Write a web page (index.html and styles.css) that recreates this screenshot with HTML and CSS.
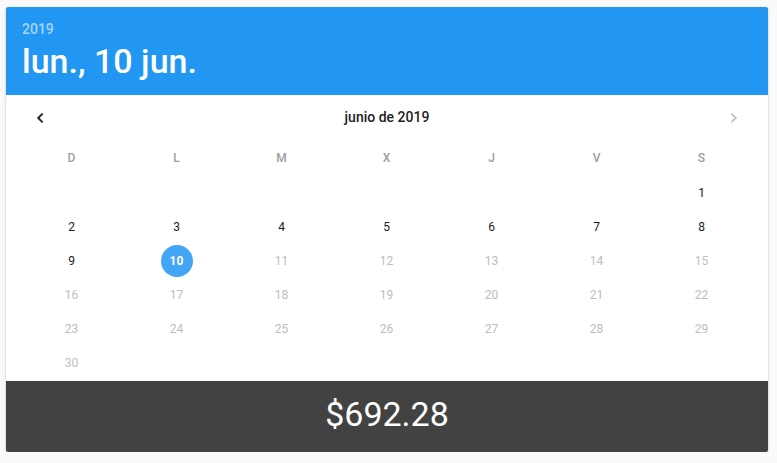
FILE: index.html
```html
<!DOCTYPE html>
<html lang="es">
<head>
<meta charset="utf-8">
<title>Selector de fecha</title>
<link rel="stylesheet" href="styles.css">
</head>
<body>
<div class="card">
  <header class="picker-header">
    <div class="year">2019</div>
    <div class="date">lun., 10 jun.</div>
  </header>
  <section class="calendar">
    <div class="nav">
      <button class="nav-btn" aria-label="Mes anterior">
        <svg viewBox="0 0 24 24" width="24" height="24"><path d="M14.6 7.6 L10.2 12 L14.6 16.4" fill="none" stroke="currentColor" stroke-width="1.9"/></svg>
      </button>
      <div class="month">junio de 2019</div>
      <button class="nav-btn disabled" aria-label="Mes siguiente">
        <svg viewBox="0 0 24 24" width="24" height="24"><path d="M9.4 7.6 L13.8 12 L9.4 16.4" fill="none" stroke="currentColor" stroke-width="1.9"/></svg>
      </button>
    </div>
    <div class="week-labels">
      <span>D</span><span>L</span><span>M</span><span>X</span><span>J</span><span>V</span><span>S</span>
    </div>
    <div class="days">
      <span></span><span></span><span></span><span></span><span></span><span></span><span class="day">1</span>
      <span class="day">2</span><span class="day">3</span><span class="day">4</span><span class="day">5</span><span class="day">6</span><span class="day">7</span><span class="day">8</span>
      <span class="day">9</span><span class="day selected"><b>10</b></span><span class="day off">11</span><span class="day off">12</span><span class="day off">13</span><span class="day off">14</span><span class="day off">15</span>
      <span class="day off">16</span><span class="day off">17</span><span class="day off">18</span><span class="day off">19</span><span class="day off">20</span><span class="day off">21</span><span class="day off">22</span>
      <span class="day off">23</span><span class="day off">24</span><span class="day off">25</span><span class="day off">26</span><span class="day off">27</span><span class="day off">28</span><span class="day off">29</span>
      <span class="day off">30</span>
    </div>
  </section>
  <footer class="total">$692.28</footer>
</div>
</body>
</html>
```

FILE: styles.css
```css
* { box-sizing: border-box; }
html, body { margin: 0; }
body {
  background: #fafafa;
  padding: 7px 0 0 6px;
  font-family: Roboto, "Noto Sans", sans-serif;
  color: #212121;
}
.card {
  width: 762px;
  background: #fff;
  border-radius: 2px;
  overflow: hidden;
  box-shadow: 0 1px 3px rgba(0,0,0,0.2), 0 1px 1px rgba(0,0,0,0.14), 0 2px 1px -1px rgba(0,0,0,0.12);
}
.picker-header {
  height: 88px;
  background: #2196f3;
  padding: 14px 16px 0;
  display: flex;
  flex-direction: column;
  gap: 4px;
}
.year {
  font-size: 14px;
  line-height: 16px;
  font-weight: 500;
  color: rgba(255,255,255,0.62);
}
.date {
  font-size: 34px;
  line-height: 40px;
  font-weight: 500;
  color: #fff;
}
.calendar {
  padding: 0 14px 1px 13px;
}
.nav {
  height: 46px;
  display: flex;
  align-items: center;
  justify-content: space-between;
  padding: 0 0 0 1px;
}
.nav-btn {
  width: 40px;
  height: 40px;
  border: 0;
  background: none;
  padding: 0;
  display: flex;
  align-items: center;
  justify-content: center;
  color: #212121;
}
.nav-btn.disabled { color: #c4c4c4; }
.month {
  font-size: 14px;
  font-weight: 500;
  line-height: 44px;
  padding-bottom: 2px;
  color: #212121;
}
.week-labels, .days {
  display: grid;
  grid-template-columns: repeat(7, 1fr);
}
.week-labels span {
  height: 35px;
  line-height: 34px;
  text-align: center;
  font-size: 12px;
  font-weight: 500;
  color: #9e9e9e;
}
.days span {
  height: 34px;
  display: flex;
  align-items: center;
  justify-content: center;
  font-size: 12px;
}
.day { color: #212121; }
.day.off { color: #bdbdbd; }
.day.selected b {
  width: 32px;
  height: 32px;
  border-radius: 50%;
  background: #42a5f5;
  color: #fff;
  font-weight: 700;
  display: flex;
  align-items: center;
  justify-content: center;
}
.total {
  height: 71px;
  background: #424242;
  color: #fff;
  font-size: 34px;
  line-height: 66px;
  padding-bottom: 5px;
  text-align: center;
}
```
